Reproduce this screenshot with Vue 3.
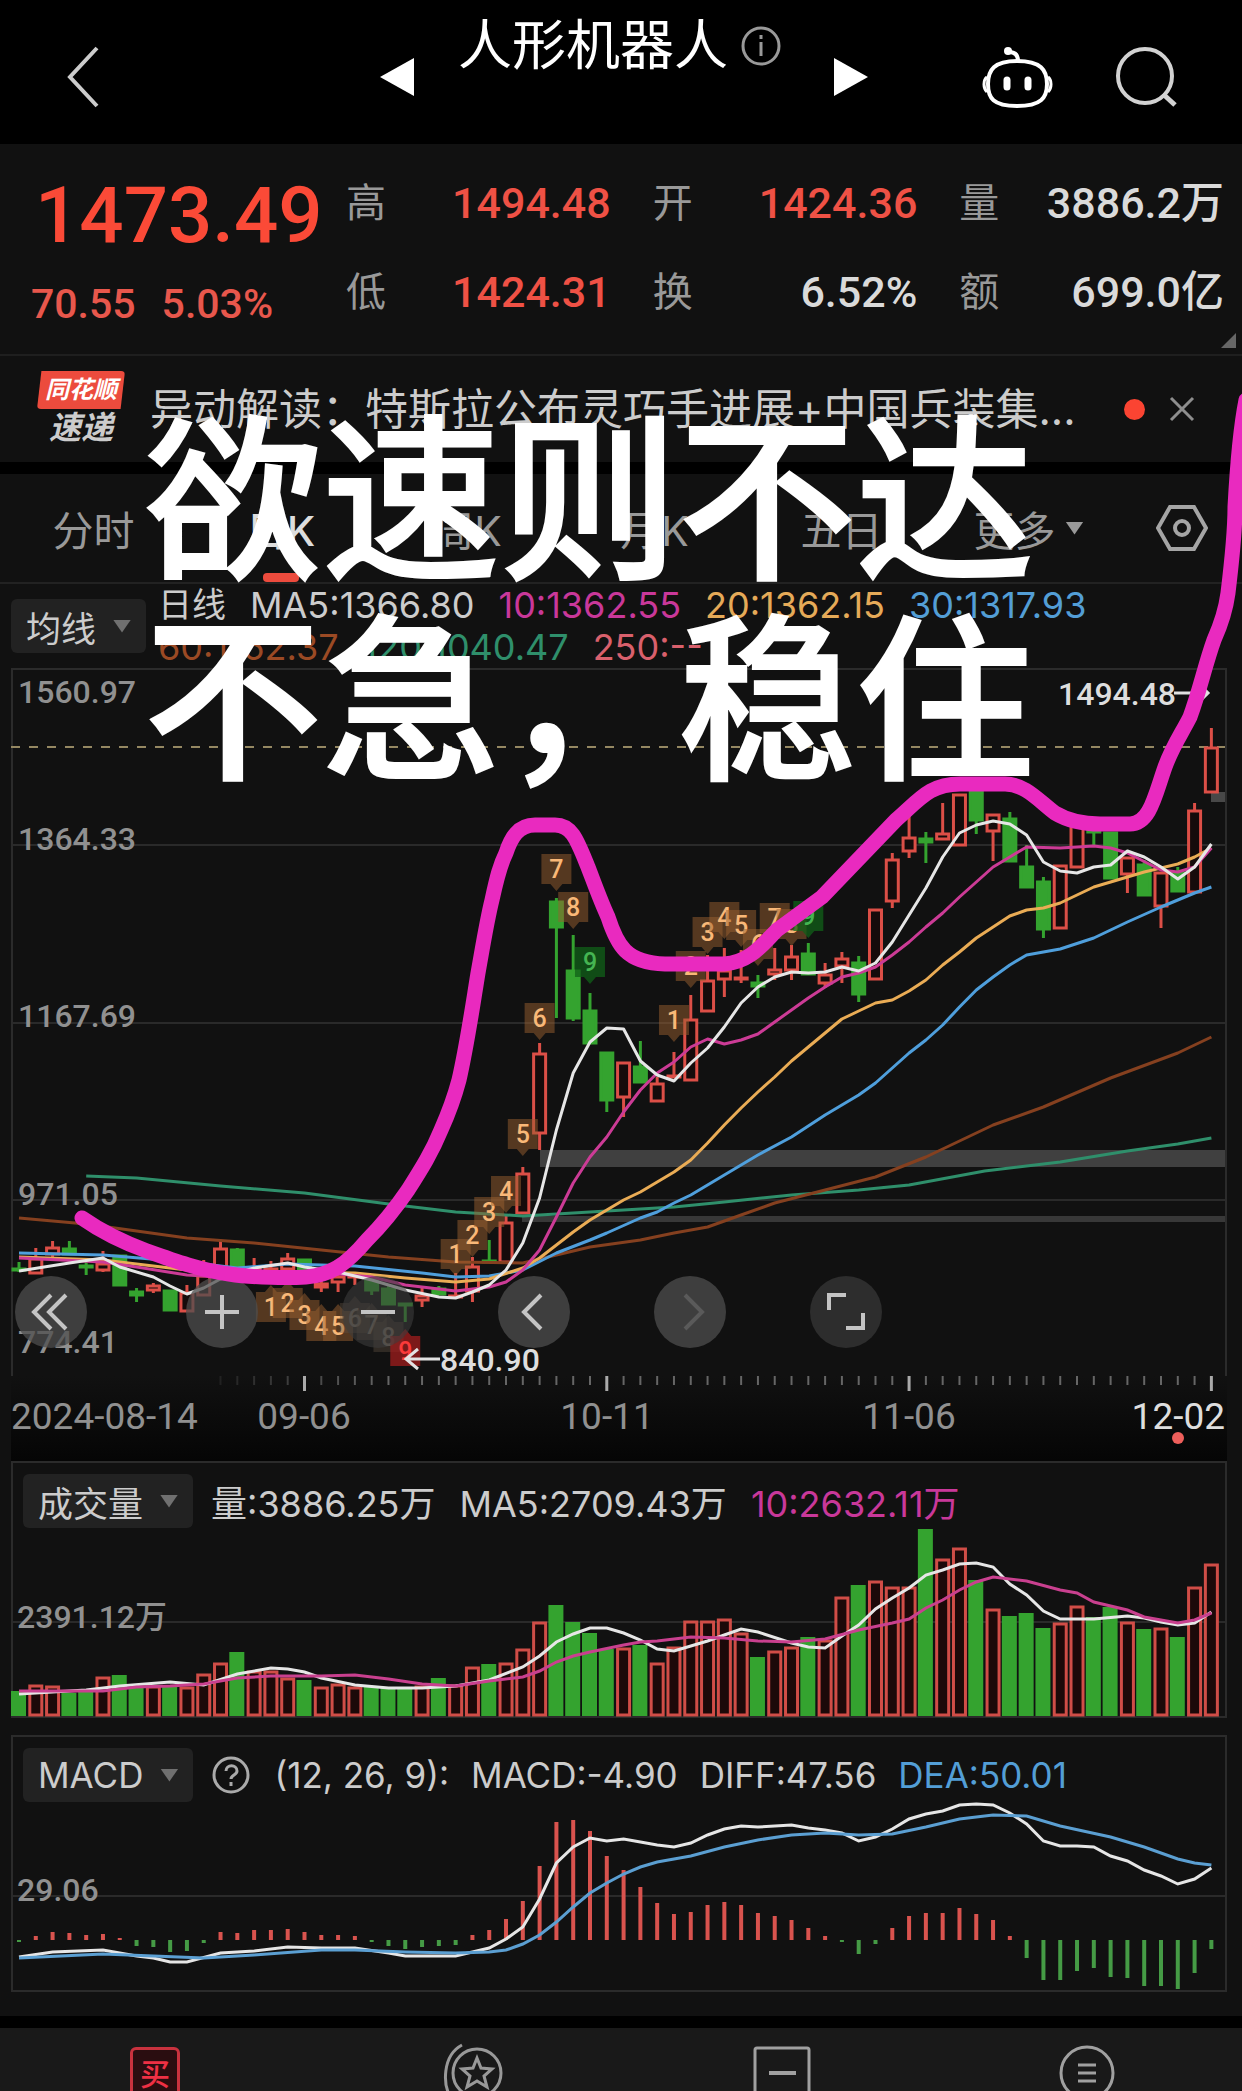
<script setup>
const STEP = 16.794
const FIRST_X = 19
const BASE_VOLUME = 1716
const BASE_MACD = 1940
const xOf = (i) => FIRST_X + i * STEP

const stats = [
  { label: '高', value: '1494.48', up: true },
  { label: '开', value: '1424.36', up: true },
  { label: '量', value: '3886.2万', up: false },
  { label: '低', value: '1424.31', up: true },
  { label: '换', value: '6.52%', up: false },
  { label: '额', value: '699.0亿', up: false },
]

const tabs = ['分时', '日K', '周K', '月K', '五日']

// direction, body top, body bottom, wick top, wick bottom
const candles = [
  'g 1268 1270 1262 1272', 'r 1258 1274 1248 1274', 'r 1247 1255 1241 1260', 'g 1248 1255 1241 1255',
  'g 1265 1267 1260 1275', 'r 1263 1271 1251 1272', 'g 1255 1286 1255 1286', 'g 1291 1296 1288 1302',
  'r 1285 1291 1283 1293', 'g 1290 1311 1290 1311', 'r 1292 1312 1285 1312', 'r 1275 1296 1260 1296',
  'r 1248 1275 1241 1275', 'g 1249 1270 1248 1270', 'r 1268 1273 1258 1273', 'r 1268 1270 1261 1275',
  'r 1258 1270 1253 1275', 'g 1259 1272 1259 1272', 'r 1283 1288 1275 1292', 'r 1276 1283 1270 1292',
  'r 1275 1278 1272 1285', 'g 1277 1291 1277 1295', 'g 1288 1305 1285 1305', 'g 1303 1305 1303 1322',
  'r 1295 1301 1286 1307', 'g 1288 1295 1286 1295', 'r 1295 1297 1273 1298', 'r 1266 1292 1257 1302',
  'g 1260 1262 1240 1262', 'r 1222 1263 1215 1263', 'r 1173 1214 1167 1214', 'r 1053 1134 1043 1150',
  'g 901 928 898 1018', 'g 970 1019 935 1021', 'g 1010 1044 993 1044', 'g 1052 1101 1052 1112',
  'r 1062 1098 1062 1117', 'g 1066 1083 1041 1083', 'r 1083 1102 1077 1102', 'r 1075 1077 1052 1078',
  'r 1019 1081 995 1081', 'r 980 1012 955 1012', 'r 970 980 948 997', 'r 977 979 950 983',
  'g 982 987 975 998', 'r 969 975 948 980', 'r 956 971 945 980', 'g 953 975 943 975',
  'r 974 984 963 988', 'r 958 967 952 983', 'g 962 995 956 1002', 'r 909 980 909 980',
  'r 859 902 853 908', 'r 837 852 813 858', 'g 838 843 832 863', 'r 833 840 803 840',
  'r 794 846 794 846', 'g 790 821 790 834', 'r 814 832 814 861', 'g 818 862 812 862',
  'g 866 888 845 888', 'g 881 930 877 938', 'r 865 929 865 929', 'r 822 868 822 868',
  'g 830 833 830 846', 'g 832 879 832 879', 'r 857 875 857 893', 'g 864 896 860 896',
  'r 872 907 872 928', 'g 872 892 867 892', 'r 810 893 803 893', 'r 747 793 728 793',
].map((row) => {
  const [dir, top, bottom, high, low] = row.split(' ')
  return { up: dir === 'r', top: +top, bottom: +bottom, high: +high, low: +low }
})

const volumes = [
  25, 31, 30, 23, 24, 39, 41, 29, 30, 29, 29, 42, 53, 64, 45, 45, 38, 36, 29, 32, 29, 30, 29, 28,
  30, 38, 31, 49, 52, 53, 67, 94, 111, 94, 83, 67, 68, 71, 53, 69, 95, 95, 97, 83, 59, 65, 69, 79,
  76, 119, 131, 135, 129, 129, 187, 157, 168, 136, 107, 100, 103, 88, 93, 110, 99, 109, 94, 87, 88, 79, 129, 152,
]

const macd = [
  -2, 4, 8, 7, 5, 6, 2, -6, -7, -12, -11, -3, 8, 7, 10, 10, 11, 8, 5, 5, 4, -2, -6, -9,
  -7, -6, -5, 5, 10, 21, 39, 74, 118, 120, 109, 84, 70, 53, 37, 26, 28, 35, 38, 35, 27, 24, 20, 12,
  4, -2, -14, -4, 12, 24, 27, 27, 32, 26, 20, 4, -18, -40, -40, -31, -28, -37, -38, -46, -46, -49, -33, -9,
]

const line = (text) =>
  text
    .split(' ')
    .map((pair) => {
      const [i, y] = pair.split(':')
      return `${xOf(+i).toFixed(1)},${y}`
    })
    .join(' ')

const priceLines = [
  { color: '#2f8f6b', points: line('4:1176 7:1178 12:1186 17:1193 22:1204 26:1212 30:1216 34:1212 39:1207 42:1202 46:1195 50:1190 53:1185 57.5:1171 62:1162 66:1151 69:1144 71:1138') },
  { color: '#85401f', points: line('0:1218 4:1224 7:1231 10:1238 14:1243 18:1250 22:1257 26:1262 30:1263 32:1255 34:1247 37:1240 39:1233 41:1227 43:1215 45:1203 48:1190 51:1177 54:1157 58:1125 61:1107 65:1078 69:1053 71:1037') },
  { color: '#4f9fdc', points: line('0:1253 5:1255 10:1262 13:1268 16:1264 20:1266 24:1273 26:1277 28:1276 30:1270 32:1253 34:1240 35:1233 37:1218 38:1212 39:1203 40:1195 42:1175 44:1155 46:1137 48:1115 50:1095 51:1083 52:1068 53:1053 54:1040 55:1025 56:1007 57:990 58:977 59:965 60:955 61:952 62:949 64:938 66:922 68:907 70:893 71:887') },
  { color: '#eaac55', points: line('0:1257 5:1260 10:1270 15:1272 20:1273 23:1278 26:1282 28:1279 30:1268 31:1258 32:1245 33:1232 34:1220 35:1210 36:1200 37:1192 38:1182 39:1172 40:1160 41:1143 42:1125 43:1108 44:1092 45:1077 46:1061 47:1047 48:1033 49:1019 50:1011 51:1003 52:1000 53:991 54:980 55:965 56:952 57:938 58:927 59:916 60:910 61:908 62:903 63:895 64:887 65:882 66:877 67:872 68:868 69:864 70:857 71:848') },
  { color: '#cc3b96', points: line('0:1258 5:1262 7:1267 10:1275 12:1277 15:1275 17:1273 19:1274 21:1277 23:1285 26:1291 28:1287 29:1282 30:1270 31:1250 32:1217 33:1183 34:1157 35:1137 36:1112 37:1090 38:1073 39:1062 40:1047 41:1039 42:1044 43:1040 44:1034 45:1022 46:1010 47:998 48:987 49:977 50:973 51:967 52:955 53:942 54:927 55:913 56:897 57:882 58:867 59:857 60:847 62:848 64:846 65:848 66:853 68:870 69:872 70:867 71:848') },
  { color: '#e6e6e6', points: line('0:1271 3:1263 5:1258 6:1267 8:1277 9:1286 10:1294 11:1288 12:1279 13:1273 14:1268 16:1263 17:1267 19:1272 20:1276 21:1280 23:1290 25:1297 26:1298 27:1292 28:1285 29:1270 30:1243 31:1198 32:1130 33:1073 34:1042 35:1028 36:1029 37:1061 38:1075 39:1081 40:1063 41:1048 42:1027 43:1003 44:987 45:977 46:972 47:973 48:972 49:967 50:971 51:963 52:942 53:915 54:888 55:857 56:833 57:825 58:821 59:824 60:835 61:862 62:871 63:873 64:867 65:865 66:851 67:857 68:867 69:879 70:867 71:844') },
]

const volumeLines = [
  { color: '#e6e6e6', points: line('0:1694 4:1690 6:1686 9:1682 11:1685 13:1674 15:1668 16:1669 17:1672 18:1678 20:1685 22:1688 24:1688 26:1686 28:1680 30:1667 31:1656 32:1642 33:1634 34:1628 35:1628 36:1633 37:1640 38:1649 39:1651 40:1646 41:1641 42:1635 43:1629 44:1632 46:1643 47:1647 48:1648 49:1636 50:1625 51:1609 52:1598 53:1588 54:1575 55:1570 56:1564 57:1563 58:1567 59:1584 60:1595 61:1611 62:1619 64:1619 66:1616 67:1618 68:1622 69:1625 70:1623 71:1612') },
  { color: '#c9408f', points: line('0:1691 5:1691 7:1687 9:1686 11:1684 13:1678 15:1676 18:1676 20:1675 22:1679 24:1684 26:1686 28:1681 30:1677 31:1671 32:1662 33:1656 34:1652 36:1645 37:1642 38:1641 40:1637 42:1638 44:1641 46:1642 48:1639 50:1630 52:1623 53:1619 54:1608 55:1600 56:1590 57:1582 58:1577 60:1581 62:1590 63:1593 64:1602 66:1610 67:1617 69:1623 70:1620 71:1613') },
]

const macdLines = [
  { color: '#e6e6e6', points: line('0:1957 2:1952 5:1950 7:1956 8:1958 9:1962 10:1962 12:1953 14:1951 16:1947 18:1948 20:1948 22:1953 23:1956 26:1956 28:1948 29:1939 30:1927 31:1899 32:1863 33:1847 34:1838 35:1841 36:1839 37:1842 38:1845 39:1847 40:1843 41:1835 42:1829 43:1826 44:1827 46:1825 47:1828 48:1830 49:1833 50:1841 51:1837 52:1829 53:1819 54:1814 55:1811 56:1805 57:1804 58:1805 59:1813 60:1824 61:1841 62:1846 63:1846 64:1847 65:1856 66:1861 67:1870 68:1876 69:1884 70:1879 71:1868') },
  { color: '#5b9fd2', points: line('0:1958 5:1954 8:1956 11:1958 14:1955 18:1950 20:1950 23:1952 26:1953 28:1952 29:1950 30:1944 31:1935 32:1922 33:1907 34:1893 35:1883 36:1874 37:1867 38:1862 40:1856 42:1847 44:1840 46:1835 48:1833 50:1835 52:1834 54:1827 56:1819 58:1815 60:1816 62:1826 65:1837 67:1847 69:1859 70:1863 71:1865') },
]

const badge = (n, i, y, kind = 'tan', below = false) => ({ n, x: xOf(i), y, kind, below })
const badges = [
  badge(1, 26, 1254), badge(2, 27, 1235), badge(3, 28, 1212), badge(4, 29, 1191), badge(5, 30, 1134),
  badge(6, 31, 1018), badge(7, 32, 869), badge(8, 33, 907), badge(9, 34, 962, 'green'),
  badge(1, 39, 1020), badge(2, 40, 966), badge(3, 41, 932), badge(4, 42, 917), badge(5, 43, 925),
  badge(6, 44, 944), badge(7, 45, 918), badge(8, 46, 924), badge(9, 47, 916, 'green'),
  badge(1, 15, 1307, 'tan', true), badge(2, 16, 1303, 'tan', true), badge(3, 17, 1315, 'tan', true),
  badge(4, 18, 1326, 'tan', true), badge(5, 19, 1326, 'tan', true), badge(6, 20, 1318, 'dim', true),
  badge(7, 21, 1325, 'dim', true), badge(8, 22, 1337, 'dim', true), badge(9, 23, 1351, 'red', true),
]

const priceLabels = [
  { text: '1560.97', y: 703 },
  { text: '1364.33', y: 850 },
  { text: '1167.69', y: 1027 },
  { text: '971.05', y: 1205 },
  { text: '774.41', y: 1353 },
]

const ticks = Array.from({ length: 60 }, (_, k) => {
  const i = k + 12
  return { x: xOf(i), major: (i - 17) % 18 === 0, opacity: Math.min(1, 0.2 + k * 0.08) }
})
</script>

<template>
  <div class="page">
    <header class="top">
      <div class="top-left">
        <button class="icon" aria-label="返回">
          <svg width="32" height="62" viewBox="0 0 32 62"><path d="M30 2 3 31l27 29" fill="none" stroke="#ccc" stroke-width="4" /></svg>
        </button>
      </div>
      <div class="top-mid">
        <button class="icon" aria-label="上一个"><svg width="34" height="38" viewBox="0 0 34 38"><path d="M34 0v38L0 19z" fill="#fff" /></svg></button>
        <h1>
          人形机器人
          <svg width="42" height="42" viewBox="0 0 42 42" fill="none" stroke="#999" stroke-width="3">
            <circle cx="21" cy="21" r="18" /><path d="M21 17v14M21 10v4" />
          </svg>
        </h1>
        <button class="icon" aria-label="下一个"><svg width="34" height="38" viewBox="0 0 34 38"><path d="M0 0v38l34-19z" fill="#fff" /></svg></button>
      </div>
      <div class="top-right">
        <button class="icon" aria-label="智能助手">
          <svg width="71" height="64" viewBox="0 0 71 64" fill="none" stroke="#fff" stroke-width="4">
            <path d="M35 16c24 0 30 9 30 23s-6 22-30 22S6 53 6 39s6-23 29-23z" />
            <path d="M5 32c-4 3-4 11 0 15M66 32c4 3 4 11 0 15" stroke-width="3" />
            <path d="M36 16c0-6-3-9-9-9" /><circle cx="26" cy="6" r="4" fill="#fff" stroke="none" />
            <path d="M25 35v7M46 35v7" stroke-width="7" stroke-linecap="round" />
          </svg>
        </button>
        <button class="icon" aria-label="搜索">
          <svg width="62" height="62" viewBox="0 0 62 62" fill="none" stroke="#d2d2d2" stroke-width="4"><circle cx="30" cy="30" r="27" /><path d="m48 48 12 11" stroke-width="5" /></svg>
        </button>
      </div>
    </header>

    <section class="quote">
      <div class="quote-main">
        <strong class="price">1473.49</strong>
        <div class="change"><span>70.55</span><span>5.03%</span></div>
      </div>
      <dl class="stats">
        <div v-for="s in stats" :key="s.label"><dt>{{ s.label }}</dt><dd :class="{ up: s.up }">{{ s.value }}</dd></div>
      </dl>
      <i class="corner"></i>
    </section>

    <section class="notice">
      <div class="brand"><span class="brand-top">同花顺</span><span class="brand-bottom">速递</span></div>
      <a class="notice-text" href="#">异动解读：特斯拉公布灵巧手进展+中国兵装集...</a>
      <i class="dot"></i>
      <button class="icon" aria-label="关闭"><svg width="26" height="26" viewBox="0 0 26 26"><path d="m2 2 22 22M24 2 2 24" stroke="#8e8e8e" stroke-width="3" /></svg></button>
    </section>

    <nav class="tabs">
      <button v-for="(t, k) in tabs" :key="t" :class="{ active: k === 1 }">{{ t }}</button>
      <button>更多 <i class="caret light"></i></button>
      <button aria-label="设置">
        <svg width="52" height="46" viewBox="0 0 52 46" fill="none" stroke="#a5a5a5" stroke-width="4"><path d="M14 2h24l12 21-12 21H14L2 23z" /><circle cx="26" cy="23" r="7" /></svg>
      </button>
    </nav>

    <section class="ma">
      <button class="pick">均线 <i class="caret"></i></button>
      <div class="legend">
        <p><span class="period">日线</span><span>MA5:1366.80</span><span class="pink">10:1362.55</span><span class="amber">20:1362.15</span><span class="blue">30:1317.93</span></p>
        <p><span class="brown">60:1152.37</span><span class="teal">120:1040.47</span><span class="rose">250:--</span></p>
      </div>
    </section>

    <section class="chart main-chart">
      <svg class="plot" viewBox="13 670 1212 706">
        <g stroke="#2a2a2a" stroke-width="2"><path d="M13 845H1225M13 1023H1225M13 1200H1225" /></g>
        <path d="M11 747H1225" stroke="#958862" stroke-width="2" stroke-dasharray="9 9" />
        <path d="M540 1150h685v17H540z" fill="#404040" />
        <path d="M522 1216h703v6H522z" fill="#383838" />
        <path d="M1211 792h14v10h-14z" fill="#484848" />
        <g class="axis"><text v-for="l in priceLabels" :key="l.text" x="18" :y="l.y">{{ l.text }}</text></g>
        <g v-for="(c, i) in candles" :key="i" :stroke="c.up ? '#dc4f47' : '#34a32f'" stroke-width="3">
          <path :d="`M${xOf(i)} ${c.high}V${c.top}M${xOf(i)} ${c.bottom}V${c.low}`" />
          <rect :x="xOf(i) - 6" :y="c.top + 1" width="12" :height="Math.max(1, c.bottom - c.top - 2)" :fill="c.up ? '#150b0b' : '#34a32f'" />
        </g>
        <polyline v-for="l in priceLines" :key="l.color" :points="l.points" fill="none" :stroke="l.color" stroke-width="3" stroke-linejoin="round" />
        <g v-for="(b, k) in badges" :key="k" class="badge" :class="b.kind">
          <path v-if="b.below" :d="`M${b.x - 15} ${b.y - 15}h9l6-7 6 7h9v30h-30z`" />
          <path v-else :d="`M${b.x - 15} ${b.y - 15}h30v30h-9l-6 7-6-7h-9z`" />
          <text :x="b.x" :y="b.y + 9">{{ b.n }}</text>
        </g>
        <g class="mark">
          <text x="1058" y="705">1494.48</text>
          <text x="440" y="1371">840.90</text>
        </g>
        <path d="M1174 693h34m-8-8 8 8-8 8M440 1359h-34m12-10-12 10 12 10" fill="none" stroke="#e2e2e2" stroke-width="3" />
      </svg>
      <div class="controls">
        <button aria-label="最早"><svg viewBox="0 0 72 72"><path d="M36 19 19 36l17 17M51 19 34 36l17 17" /></svg></button>
        <button aria-label="放大"><svg viewBox="0 0 72 72"><path d="M19 36h34M36 19v34" /></svg></button>
        <button class="faint" aria-label="缩小"><svg viewBox="0 0 72 72"><path d="M19 36h34" /></svg></button>
        <button aria-label="向前"><svg viewBox="0 0 72 72"><path d="M43 19 26 36l17 17" /></svg></button>
        <button class="off" aria-label="向后"><svg viewBox="0 0 72 72"><path d="m31 19 17 17-17 17" /></svg></button>
        <button class="dark" aria-label="全屏"><svg viewBox="0 0 72 72"><path d="M19 34V19h17M53 37v15H36" /></svg></button>
      </div>
    </section>

    <section class="time-axis">
      <svg class="plot" viewBox="11 1376 1216 85">
        <path v-for="t in ticks" :key="t.x" :d="`M${t.x} 1376v${t.major ? 15 : 9}`" :stroke="t.major ? '#aaa' : '#666'" :stroke-width="t.major ? 3 : 2" :opacity="t.major ? 1 : t.opacity" />
        <text x="11" y="1429">2024-08-14</text>
        <text class="mid" x="304" y="1429">09-06</text>
        <text class="mid" x="607" y="1429">10-11</text>
        <text class="mid" x="909" y="1429">11-06</text>
        <text class="end" x="1225" y="1429">12-02</text>
        <circle cx="1178" cy="1438" r="6" fill="#ee5f5b" />
      </svg>
    </section>

    <section class="chart closed">
      <div class="chart-head">
        <button class="pick">成交量 <i class="caret"></i></button>
        <p><span>量:3886.25万</span><span>MA5:2709.43万</span><span class="pink">10:2632.11万</span></p>
      </div>
      <svg class="plot" viewBox="13 1529 1212 187">
        <path d="M13 1622H1225" stroke="#2a2a2a" stroke-width="2" />
        <g class="axis"><text x="17" y="1628">2391.12万</text></g>
        <template v-for="(v, i) in volumes" :key="i">
          <rect v-if="candles[i].up" :x="xOf(i) - 6" :y="BASE_VOLUME - v + 1" width="12" :height="v - 2" fill="#1c0909" stroke="#d04d47" stroke-width="3" />
          <rect v-else :x="xOf(i) - 8" :y="BASE_VOLUME - v" width="15" :height="v" fill="#34a32f" />
        </template>
        <polyline v-for="l in volumeLines" :key="l.color" :points="l.points" fill="none" :stroke="l.color" stroke-width="3" />
      </svg>
    </section>

    <section class="chart closed">
      <div class="chart-head macd-head">
        <button class="pick">MACD <i class="caret"></i></button>
        <svg class="help" width="40" height="40" viewBox="0 0 40 40" fill="none" stroke="#aaa" stroke-width="3">
          <circle cx="20" cy="20" r="17" /><path d="M15 16c0-7 11-7 11 0 0 4-6 4-6 8M20 27v4" />
        </svg>
        <p><span>(12, 26, 9):</span><span>MACD:-4.90</span><span>DIFF:47.56</span><span class="blue">DEA:50.01</span></p>
      </div>
      <svg class="plot" viewBox="13 1803 1212 187">
        <path d="M13 1896H1225" stroke="#2a2a2a" stroke-width="2" />
        <g class="axis"><text x="17" y="1901">29.06</text></g>
        <rect v-for="(m, i) in macd" :key="i" :x="xOf(i) - 2" :y="m > 0 ? BASE_MACD - m : BASE_MACD" width="4" :height="Math.abs(m)" :fill="m > 0 ? '#d9534e' : '#459b45'" />
        <polyline v-for="l in macdLines" :key="l.color" :points="l.points" fill="none" :stroke="l.color" stroke-width="3" />
      </svg>
    </section>

    <nav class="bottom">
      <button><span class="buy">买</span></button>
      <button aria-label="自选">
        <svg width="62" height="60" viewBox="0 0 62 60" fill="none" stroke="#999" stroke-width="3">
          <circle cx="36" cy="30" r="24" /><path d="M21 2C2 12 0 42 12 58" />
          <path d="m36 15 4 10 11 1-8 7 3 11-10-6-10 6 3-11-8-7 11-1z" />
        </svg>
      </button>
      <button aria-label="交易">
        <svg width="58" height="60" viewBox="0 0 58 60" fill="none" stroke="#a0a0a0" stroke-width="3"><rect x="2" y="5" width="54" height="60" rx="2" /><path d="M16 30h27" stroke-width="4" /></svg>
      </button>
      <button aria-label="更多">
        <svg width="58" height="60" viewBox="0 0 58 60" fill="none" stroke="#a0a0a0" stroke-width="3"><circle cx="29" cy="30" r="26" /><path d="M20 22h18M20 30h18M20 38h18" /></svg>
      </button>
    </nav>

    <svg class="sketch" viewBox="0 0 1242 2091">
      <path d="M82 1218C102 1232 125 1243 147 1251C175 1261 200 1270 229 1274C255 1278 290 1278 306 1277C330 1275 345 1266 367 1240C385 1222 395 1209 408 1190C422 1168 432 1152 441 1130C450 1110 455 1095 459 1080C467 1045 472 1010 478 973C483 945 487 920 492 900C497 877 500 865 506 853C511 838 518 825 535 825H555C572 825 577 840 588 867C596 888 601 902 608 917C617 945 626 963 665 964H724C750 962 762 945 777 930L822 897L896 820C920 799 930 784 960 784H1005C1025 784 1038 800 1055 813C1070 822 1084 824 1100 824H1130C1150 824 1155 795 1165 767C1173 745 1182 733 1190 717C1200 690 1205 665 1214 640C1223 620 1226 608 1228 593C1232 560 1235 530 1235 507C1237 470 1240 430 1246 400" fill="none" stroke="#e92abf" stroke-width="15" stroke-linecap="round" stroke-linejoin="round" />
    </svg>
    <p class="slogan">欲速则不达<br />不急，稳住</p>
  </div>
</template>

<style>
body { margin: 0; background: #111; }
</style>

<style scoped>
* { box-sizing: border-box; }
.page { position: relative; overflow: hidden; background: #111; color: #ccc; font-family: Inter, "Noto Sans CJK SC", sans-serif; }
button { padding: 0; border: 0; background: none; color: inherit; font: inherit; }
svg { display: block; flex: none; }
p, h1, dl, dd { margin: 0; }
a { color: inherit; text-decoration: none; }

.top { display: grid; grid-template-columns: 380px 488px 1fr; height: 144px; padding-top: 9px; background: #000; }
.top-left, .top-mid, .top-right { display: flex; align-items: center; }
.top-left { padding-left: 67px; }
.top-mid { justify-content: space-between; }
.top-right { justify-content: flex-end; gap: 62px; padding-right: 65px; }
h1 { display: flex; align-items: center; gap: 12px; padding: 0 8px 62px 0; color: #fff; font-size: 54px; font-weight: 400; line-height: 72px; }

.quote { position: relative; display: grid; grid-template-columns: 346px 1fr; border-bottom: 2px solid #1f1f1f; font-family: Roboto, "Noto Sans CJK SC", sans-serif; }
.quote-main { padding-top: 28px; color: #e8574c; }
.price { display: block; padding-left: 35px; color: #fb4a37; font-size: 78px; font-weight: 500; line-height: 88px; }
.change { display: flex; gap: 26px; padding-left: 31px; font-size: 41px; font-weight: 500; line-height: 88px; }
.stats { display: grid; grid-template-columns: repeat(3, 1fr); column-gap: 42px; padding: 15px 18px 17px 0; line-height: 89px; }
.stats div { display: flex; justify-content: space-between; }
dt { color: #999; font-size: 40px; }
dd { color: #dadada; font-size: 43px; font-weight: 500; }
.up { color: #ef5145; }
.corner { position: absolute; right: 6px; bottom: 6px; width: 15px; height: 15px; background: #666; clip-path: polygon(100% 0, 100% 100%, 0 100%); }

.notice { display: flex; align-items: center; height: 118px; padding: 0 47px 0 37px; border-bottom: 12px solid #000; }
.brand { display: flex; flex-direction: column; align-items: center; width: 88px; margin-right: 25px; font-style: italic; font-weight: 700; text-align: center; }
.brand-top { width: 88px; border-radius: 4px; background: #ec4b3d; color: #fff; font-size: 24px; line-height: 38px; clip-path: polygon(5% 0, 100% 0, 95% 100%, 0 100%); }
.brand-bottom { font-size: 32px; line-height: 38px; }
.notice-text { flex: 1; overflow: hidden; font-size: 43px; line-height: 60px; white-space: nowrap; }
.dot { width: 21px; height: 21px; margin-right: 24px; border-radius: 50%; background: #fb4432; }

.tabs { display: grid; grid-template-columns: repeat(6, 187fr) 120fr; height: 110px; border-bottom: 2px solid #222; color: #999; font-size: 41px; }
.tabs button { position: relative; display: flex; align-items: center; justify-content: center; gap: 10px; }
.tabs .active { color: #ddd; font-weight: 500; }
.tabs .active::after { content: ""; position: absolute; bottom: 0; width: 36px; height: 9px; border-radius: 4px; background: #ec4b3d; }
.caret { width: 18px; height: 13px; background: #707070; clip-path: polygon(0 0, 100% 0, 50% 100%); }
.caret.light { background: #999; }

.ma { display: flex; align-items: center; gap: 12px; height: 84px; padding: 0 0 0 11px; }
.pick { display: flex; flex: none; align-items: center; gap: 17px; height: 54px; padding: 0 15px; border-radius: 6px; background: #222; font-size: 35px; }
.legend { font-size: 36px; line-height: 42px; }
.period { font-size: 34px; }
.ma p, .chart-head p { display: flex; gap: 24px; white-space: nowrap; }
.pink { color: #c9389a; }
.amber { color: #e5aa58; }
.blue { color: #539ed6; }
.brown { color: #9b4a24; }
.teal { color: #2f8f6b; }
.rose { color: #d9606c; }

.chart { position: relative; margin: 0 15px 0 11px; border: 2px solid #2b2b2b; }
.main-chart { border-bottom: 0; }
.closed { margin-bottom: 17px; }
.closed + .bottom { margin-top: 24px; }
.plot { width: 100%; height: auto; overflow: visible; font-family: Roboto, "Noto Sans CJK SC", sans-serif; font-weight: 500; }
.axis text { fill: #909090; font-size: 32px; }
.mark text { fill: #dedede; font-size: 32px; }
.badge path { fill: #9a6030; fill-opacity: 0.5; }
.badge text { fill: #f9b878; font-size: 25px; text-anchor: middle; }
.badge.green path { fill: #106018; fill-opacity: 0.75; }
.badge.green text { fill: #45b552; }
.badge.dim path { fill: #605040; fill-opacity: 0.4; }
.badge.dim text { fill: #756b60; }
.badge.red path { fill: #a01c1c; fill-opacity: 0.75; }
.badge.red text { fill: #fa3a3a; }

.controls { position: absolute; bottom: 28px; left: 2px; display: flex; gap: 84px; }
.controls button { width: 72px; height: 72px; border-radius: 50%; background: rgba(78, 78, 78, 0.75); }
.controls button:first-child { margin-right: 15px; }
.controls .faint { background: rgba(60, 60, 60, 0.6); }
.controls .dark { background: #2d2d2d; }
.controls path { fill: none; stroke: #c4c4c4; stroke-width: 4; }
.controls .off path { stroke: #5a5a5a; }

.time-axis { margin: 0 15px 0 11px; background: linear-gradient(#111, #050505); }
.time-axis text { fill: #909090; font-size: 37px; font-weight: 400; }
.time-axis .mid { text-anchor: middle; }
.time-axis .end { fill: #dedede; text-anchor: end; }

.chart-head { display: flex; align-items: center; height: 66px; padding: 10px 0 0 10px; font-size: 36px; }
.chart-head p { margin-left: 18px; }
.macd-head { font-size: 35px; }
.help { margin-left: 18px; }
.help + p { margin-left: 23px; gap: 22px; }

.bottom { display: grid; grid-template-columns: 310fr 323fr 298fr 311fr; height: 75px; overflow: hidden; border-top: 12px solid #000; background: #191919; }
.bottom button { display: flex; justify-content: center; padding-top: 15px; }
.buy { width: 50px; height: 60px; margin-top: 4px; border: 3px solid #c8323e; border-radius: 6px; background: #2a0d10; color: #ee3044; font-size: 30px; font-weight: 500; line-height: 48px; }

.sketch { position: absolute; top: 0; left: 0; width: 100%; height: auto; pointer-events: none; }
.slogan { position: absolute; top: 389px; left: 144px; color: #fff; font-family: "Noto Sans CJK SC", sans-serif; font-size: 178px; font-weight: 500; line-height: 200px; white-space: nowrap; pointer-events: none; -webkit-text-stroke: 2px #fff; }
</style>
